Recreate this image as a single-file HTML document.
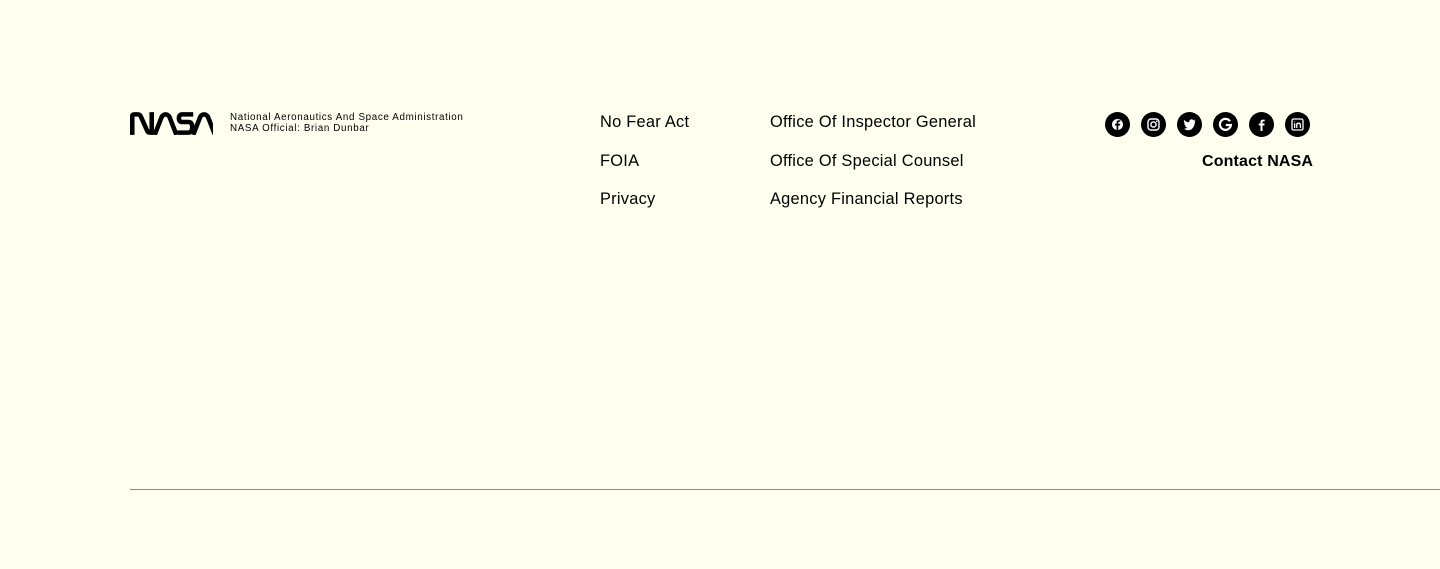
<!DOCTYPE html>
<html><head><style>
body{margin:0;width:1440px;height:569px;background:#fffff0;font-family:"Liberation Sans",sans-serif;color:#000;position:relative;overflow:hidden}
.a{position:absolute;white-space:nowrap}
.l{font-size:16.4px;line-height:20px;letter-spacing:0.25px}
.s{font-size:9.8px;line-height:10.5px;letter-spacing:0.65px}
.ic{position:absolute;top:112px;width:25px;height:25px;border-radius:50%;background:#000}
.ic svg{position:absolute;left:0;top:0}
</style></head><body>
<svg class="a" style="left:130px;top:112px" width="83" height="23" viewBox="0 0 84 23">
<g fill="none" stroke="#000" stroke-width="4.6" stroke-linecap="butt">
<path d="M2.3 23 V4 Q2.3 2.3 4.5 2.3 H8 Q10 2.3 11 4.5 L17 18 Q18 20.7 20 20.7 H22 V0"/>
<path d="M25 23 L32 5 Q33.5 2.3 36 2.3 Q38.5 2.3 40 5 L47 23"/>
<path d="M64 2.3 H53 Q49.5 2.3 49.5 6.2 Q49.5 10 53 10 H59 Q63 10 63 15 Q63 20.7 59 20.7 H48"/>
<path d="M64 23 L71 5 Q72.5 2.3 75 2.3 Q77.5 2.3 79 5 L86 23"/>
</g></svg>
<div class="a s" style="left:230px;top:113px">National Aeronautics And Space Administration<br>NASA Official: Brian Dunbar</div>
<div class="a l" style="left:600px;top:112px">No Fear Act</div>
<div class="a l" style="left:600px;top:151px">FOIA</div>
<div class="a l" style="left:600px;top:189px">Privacy</div>
<div class="a l" style="left:770px;top:112px">Office Of Inspector General</div>
<div class="a l" style="left:770px;top:151px">Office Of Special Counsel</div>
<div class="a l" style="left:770px;top:189px">Agency Financial Reports</div>
<div class="ic" style="left:1105px"><svg width="25" height="25"><circle cx="12.5" cy="12.5" r="5.5" fill="#fff"/><path d="M13.3 18 V13.5 H15 L15.3 11.7 H13.3 V10.6 Q13.3 9.8 14.2 9.8 H15.3 V8.2 H13.8 Q11.6 8.2 11.6 10.4 V11.7 H10 V13.5 H11.6 V18Z" fill="#000"/></svg></div>
<div class="ic" style="left:1141px"><svg width="25" height="25"><rect x="7" y="7" width="11" height="11" rx="3" fill="none" stroke="#fff" stroke-width="1.4"/><circle cx="12.5" cy="12.5" r="2.6" fill="none" stroke="#fff" stroke-width="1.4"/><circle cx="15.8" cy="9.2" r=".8" fill="#fff"/></svg></div>
<div class="ic" style="left:1177px"><svg width="25" height="25"><path d="M18.5 8.6 Q17.8 8.9 17 9 Q17.9 8.4 18.2 7.5 Q17.4 8 16.5 8.2 Q15.7 7.3 14.6 7.3 Q12.3 7.3 12.1 10.3 Q9 10.2 7.2 7.9 Q6.2 10.1 8.2 11.6 Q7.6 11.6 7.1 11.3 Q7.2 13.3 9.1 13.8 Q8.5 14 8 13.9 Q8.6 15.5 10.3 15.6 Q8.5 17 6.5 16.8 Q14 21 17.2 13.5 Q17.9 11.5 17.8 10 Q18.2 9.4 18.5 8.6Z" fill="#fff"/></svg></div>
<div class="ic" style="left:1213px"><svg width="25" height="25"><path d="M17 9.3 A5.5 5.5 0 1 0 17.9 13 H12.8" fill="none" stroke="#fff" stroke-width="2.2"/></svg></div>
<div class="ic" style="left:1249px"><svg width="25" height="25"><path d="M13.5 19 V13.5 H15.3 L15.6 11.5 H13.5 V10.3 Q13.5 9.4 14.4 9.4 H15.7 V7.6 H14 Q11.5 7.6 11.5 10.1 V11.5 H9.8 V13.5 H11.5 V19Z" fill="#fff"/></svg></div>
<div class="ic" style="left:1285px"><svg width="25" height="25"><rect x="7" y="7" width="11" height="11" rx="1.5" fill="none" stroke="#fff" stroke-width="1.3"/><path d="M9.6 11.3 V16 M9.6 9.4 V9.9 M11.8 16 V11.3 M11.8 13.5 Q11.8 11.2 13.6 11.2 Q15.4 11.2 15.4 13.3 V16" fill="none" stroke="#fff" stroke-width="1.3"/></svg></div>
<div class="a" style="left:1202px;top:152px;font-size:16px;line-height:20px;font-weight:bold;letter-spacing:0.15px">Contact NASA</div>
<div class="a" style="left:130px;top:489px;width:1310px;height:1px;background:#888"></div>
</body></html>
